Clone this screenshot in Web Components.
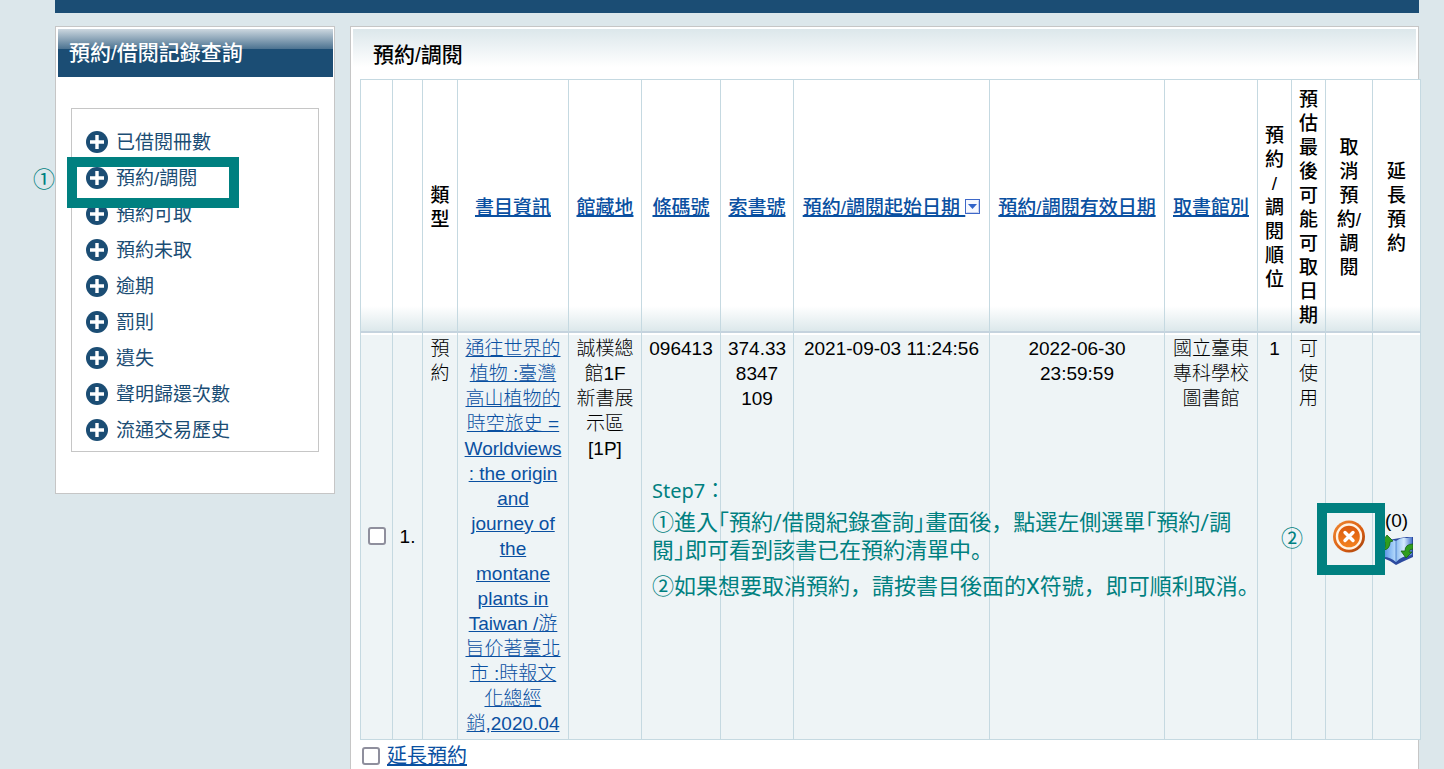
<!DOCTYPE html>
<html lang="zh-Hant">
<head>
<meta charset="utf-8">
<title>預約/調閱</title>
<style>
  body { margin: 0; background: #dce7eb; font: 19px/25px "Liberation Sans", "Noto Sans CJK TC", sans-serif; color: #000; }
</style>
</head>
<body>
<library-app></library-app>

<script>
const define = (name, html) => {
  const template = document.createElement('template');
  template.innerHTML = html;
  customElements.define(name, class extends HTMLElement {
    constructor() {
      super();
      this.attachShadow({ mode: 'open' }).append(template.content.cloneNode(true));
    }
  });
};

/* Round plus bullet of the side menu */
define('plus-icon', `
<style>:host { display: block; width: 22px; height: 22px; } svg { display: block; }</style>
<svg width="22" height="22" viewBox="0 0 22 22" aria-hidden="true">
  <circle cx="11" cy="11" r="11" fill="#1b4d74"/>
  <path d="M11 4v14M4 11h14" stroke="#fff" stroke-width="3.4"/>
</svg>`);

/* Descending sort marker */
define('sort-icon', `
<style>:host { display: inline-block; width: 15px; height: 15px; } svg { display: block; }</style>
<svg width="15" height="15" viewBox="0 0 15 15" aria-hidden="true">
  <rect x=".5" y=".5" width="14" height="14" fill="#f6f8ff" stroke="#3d67c8"/>
  <path d="M1.5 13.5h12v-12" fill="none" stroke="#c9d2ee"/>
  <path d="M3 5h9l-4.500 5z" fill="#3163c9"/>
</svg>`);

/* Orange cancel button */
define('cancel-icon', `
<style>:host { display: block; width: 32px; height: 33px; } svg { display: block; }</style>
<svg width="32" height="33" viewBox="0 0 32 33" aria-hidden="true">
  <defs>
    <linearGradient id="rim" x1="0" y1="0" x2="1" y2="1"><stop offset="0" stop-color="#f08a34"/><stop offset=".6" stop-color="#d95c10"/><stop offset="1" stop-color="#9c4110"/></linearGradient>
    <linearGradient id="disc" x1="0" y1="0" x2="0" y2="1"><stop offset="0" stop-color="#d9560c"/><stop offset="1" stop-color="#f58420"/></linearGradient>
  </defs>
  <circle cx="16" cy="16.500" r="16" fill="url(#rim)"/>
  <circle cx="16" cy="16.500" r="12" fill="url(#disc)" stroke="#fff3e4" stroke-width="2.400"/>
  <path d="M12 12.500l8 8M20 12.500l-8 8" stroke="#fff" stroke-width="3.400" stroke-linecap="round"/>
</svg>`);

/* Open book with green renewal arrows */
define('renew-icon', `
<style>:host { display: block; width: 32px; height: 32px; } svg { display: block; }</style>
<svg width="32" height="32" viewBox="0 0 32 32" aria-hidden="true">
  <defs>
    <linearGradient id="pl" x1="0" x2="1"><stop offset="0" stop-color="#4f8be0"/><stop offset=".6" stop-color="#8fbff4"/><stop offset="1" stop-color="#b9dcfb"/></linearGradient>
    <linearGradient id="pr" x1="0" x2="1"><stop offset="0" stop-color="#8fbdf0"/><stop offset=".5" stop-color="#d5ebfc"/><stop offset="1" stop-color="#4a74cc"/></linearGradient>
  </defs>
  <path d="M1 8L2 25 9 28 15 32 21 29 32 24V4L25 4z" fill="#2c4a9f"/>
  <path d="M2 8Q9 5 15 8V29Q9 24 3 24z" fill="url(#pl)"/>
  <path d="M15 8Q20 4 26 5L31 4V22Q20 23 15 29z" fill="url(#pr)"/>
  <path d="M15 8v21" stroke="#5487cf"/>
  <path d="M1 9L6 2l6 6-3 1q0 7-6 8 2-4 1-8z" fill="#2f9e1d" stroke="#176311" stroke-width=".8"/>
  <path d="M32 11q-8 0-8 7h-4l5 7 6-6h-3q0-3 4-3z" fill="#2f9e1d" stroke="#176311" stroke-width=".8"/>
</svg>`);

/* Teal rectangle laid over what it points at; its user sizes it */
define('mark-frame', `
<style>:host { display: block; position: absolute; box-sizing: border-box; border: 10px solid #008080; pointer-events: none; }</style>`);

/* Circled step number */
define('step-badge', `
<style>:host { display: block; position: absolute; color: #008080; font: 22px/28px "Noto Sans CJK JP", sans-serif; }</style>
<slot></slot>`);

define('menu-item', `
<style>
  :host { display: block; position: relative; }
  a { display: flex; align-items: center; gap: 8px; height: 36px; padding-left: 14px; color: #1b4d74; text-decoration: none; }
  mark-frame { left: -5px; top: -3px; width: 172px; height: 51px; z-index: 1; }
  step-badge { left: -39px; top: 3px; }
  :host(:not([marked])) :is(mark-frame, step-badge) { display: none; }
</style>
<a href="#"><plus-icon></plus-icon><span><slot></slot></span></a>
<mark-frame></mark-frame><step-badge>①</step-badge>`);

define('side-menu', `
<style>
  :host { display: block; box-sizing: border-box; width: 280px; flex: none; align-self: flex-start; background: #fff; border: 1px solid #c6c6c6; padding: 2px 1px 41px 2px; }
  h2 { margin: 0; height: 48px; padding-left: 11px; font-size: 21px; line-height: 48px; font-weight: 500; color: #fff; background: linear-gradient(#ccd7df, #4c7391 20px, #1b4d74 20px); }
  nav { margin: 31px 14px 0 13px; border: 1px solid #c6c6c6; padding: 15px 0 3px; }
</style>
<h2>預約/借閱記錄查詢</h2>
<nav><slot></slot></nav>`);

define('hold-table', `
<style>
  :host { display: block; }
  table { width: 100%; table-layout: fixed; border-spacing: 0; text-align: center; border-top: 1px solid #c5d9e1; }
  th, td { border-left: 1px solid #c5d9e1; }
  th:last-child, td:last-child { border-right: 1px solid #c5d9e1; }
  th { height: 240px; padding: 8px 0 3px; line-height: 24px; font-weight: 500; vertical-align: middle; border-bottom: 2px solid #c5d3de; background: linear-gradient(to top, #dce8eb, #fff 25px); }
  td { padding: 3px 5px; vertical-align: top; border-bottom: 1px solid #c5d9e1; background: linear-gradient(#fff 2px, #eef4f6 2px); font-weight: 300; }
  td.title { padding: 3px 6px; }
  td.mid { vertical-align: middle; padding: 0; }
  a { color: #0a50a1; }
  th a { text-decoration-thickness: 2px; white-space: nowrap; }
  input { appearance: none; display: block; box-sizing: border-box; width: 18px; height: 18px; margin: 0 auto; border: 2px solid #8f8f9d; border-radius: 3px; background: #fff; }
  button { position: relative; display: block; margin: 0 auto; padding: 0; border: 0; background: none; }
  mark-frame { left: -16px; top: -17px; width: 68px; height: 72px; }
  step-badge { left: -52px; top: 2px; }
  .renew { display: flex; flex-direction: column; align-items: center; }
  col.w30 { width: 30px; } col.w32 { width: 32px; } col.w34 { width: 34px; } col.w47 { width: 47px; }
  col.w73 { width: 73px; } col.w79 { width: 79px; } col.w93 { width: 93px; } col.w111 { width: 111px; }
  col.w175 { width: 175px; } col.w196 { width: 196px; } col.w35 { width: 35px; } col.w49 { width: 49px; }
</style>
<table>
  <colgroup><col class="w32"><col class="w30"><col class="w35"><col class="w111"><col class="w73"><col class="w79"><col class="w73"><col class="w196"><col class="w175"><col class="w93"><col class="w34"><col class="w34"><col class="w47"><col class="w49"></colgroup>
  <thead>
    <tr>
      <th></th><th></th><th>類<br>型</th>
      <th><a href="#">書目資訊</a></th><th><a href="#">館藏地</a></th><th><a href="#">條碼號</a></th><th><a href="#">索書號</a></th>
      <th><a href="#">預約/調閱起始日期 <sort-icon></sort-icon></a></th>
      <th><a href="#">預約/調閱有效日期</a></th><th><a href="#">取書館別</a></th>
      <th>預<br>約<br>/<br>調<br>閱<br>順<br>位</th>
      <th>預<br>估<br>最<br>後<br>可<br>能<br>可<br>取<br>日<br>期</th>
      <th>取<br>消<br>預<br>約/<br>調<br>閱</th>
      <th>延<br>長<br>預<br>約</th>
    </tr>
  </thead>
  <tbody>
    <tr>
      <td class="mid"><input type="checkbox" aria-label="選取第 1 筆"></td>
      <td class="mid">1.</td>
      <td>預<br>約</td>
      <td class="title"><a href="#">通往世界的植物 :臺灣高山植物的時空旅史 = Worldviews : the origin and journey of the montane plants in Taiwan /游旨价著臺北市 :時報文化總經銷,2020.04</a></td>
      <td>誠樸總館1F 新書展示區[1P]</td>
      <td>096413</td>
      <td>374.33 8347 109</td>
      <td>2021-09-03 11:24:56</td>
      <td>2022-06-30 23:59:59</td>
      <td>國立臺東專科學校圖書館</td>
      <td>1</td>
      <td>可<br>使<br>用</td>
      <td class="mid"><button type="button" aria-label="取消預約"><cancel-icon></cancel-icon><mark-frame></mark-frame><step-badge>②</step-badge></button></td>
      <td class="mid"><div class="renew">(0)<renew-icon></renew-icon></div></td>
    </tr>
  </tbody>
</table>`);

define('step-note', `
<style>
  :host { display: block; color: #008080; font: 22px/28px Roboto, "Noto Sans CJK JP", sans-serif; white-space: nowrap; }
  p { margin: 0 0 8px; }
  p.step { margin-bottom: 6px; line-height: 24px; font-family: "Noto Sans", "Noto Sans CJK JP", sans-serif; font-size: 20px; }
  .half { font-feature-settings: "halt"; }
</style>
<p class="step" lang="ja">Step7：</p>
<p lang="ja">①進入<span class="half">「</span>預約/借閱紀錄查詢<span class="half">」</span>畫面後，點選左側選單<span class="half">「</span>預約/調<br>閱<span class="half">」</span>即可看到該書已在預約清單中。</p>
<p lang="ja">②如果想要取消預約，請按書目後面的X符號，即可順利取消。</p>`);

define('record-panel', `
<style>
  :host { display: block; position: relative; flex: 1; min-width: 0; background: #fff; border: 1px solid #c6c6c6; border-bottom: 0; }
  h1 { margin: 2px 2px 0; height: 50px; padding-left: 20px; font-size: 21px; line-height: 52px; font-weight: 500; background: linear-gradient(#dce7eb, #fff 38px); }
  hold-table { margin: 0 -3px 0 9px; }
  .foot { display: flex; align-items: center; gap: 7px; height: 32px; padding-left: 11px; font-size: 20px; }
  .foot input { appearance: none; box-sizing: border-box; width: 18px; height: 18px; margin: 0; border: 2px solid #8f8f9d; border-radius: 3px; background: #fff; }
  .foot a { color: #0a50a1; }
  step-note { position: absolute; left: 301px; top: 452px; }
</style>
<h1>預約/調閱</h1>
<hold-table></hold-table>
<div class="foot"><input type="checkbox" aria-label="延長預約"><a href="#">延長預約</a></div>
<step-note></step-note>`);

define('library-app', `
<style>
  :host { display: flex; flex-direction: column; box-sizing: border-box; height: 100vh; overflow: hidden; padding: 0 25px 0 55px; }
  header { height: 13px; flex: none; background: #1b4d74; }
  main { display: flex; flex: 1; gap: 15px; margin-top: 13px; }
</style>
<header></header>
<main>
  <side-menu>
    <menu-item>已借閱冊數</menu-item>
    <menu-item marked>預約/調閱</menu-item>
    <menu-item>預約可取</menu-item>
    <menu-item>預約未取</menu-item>
    <menu-item>逾期</menu-item>
    <menu-item>罰則</menu-item>
    <menu-item>遺失</menu-item>
    <menu-item>聲明歸還次數</menu-item>
    <menu-item>流通交易歷史</menu-item>
  </side-menu>
  <record-panel></record-panel>
</main>`);
</script>
</body>
</html>
